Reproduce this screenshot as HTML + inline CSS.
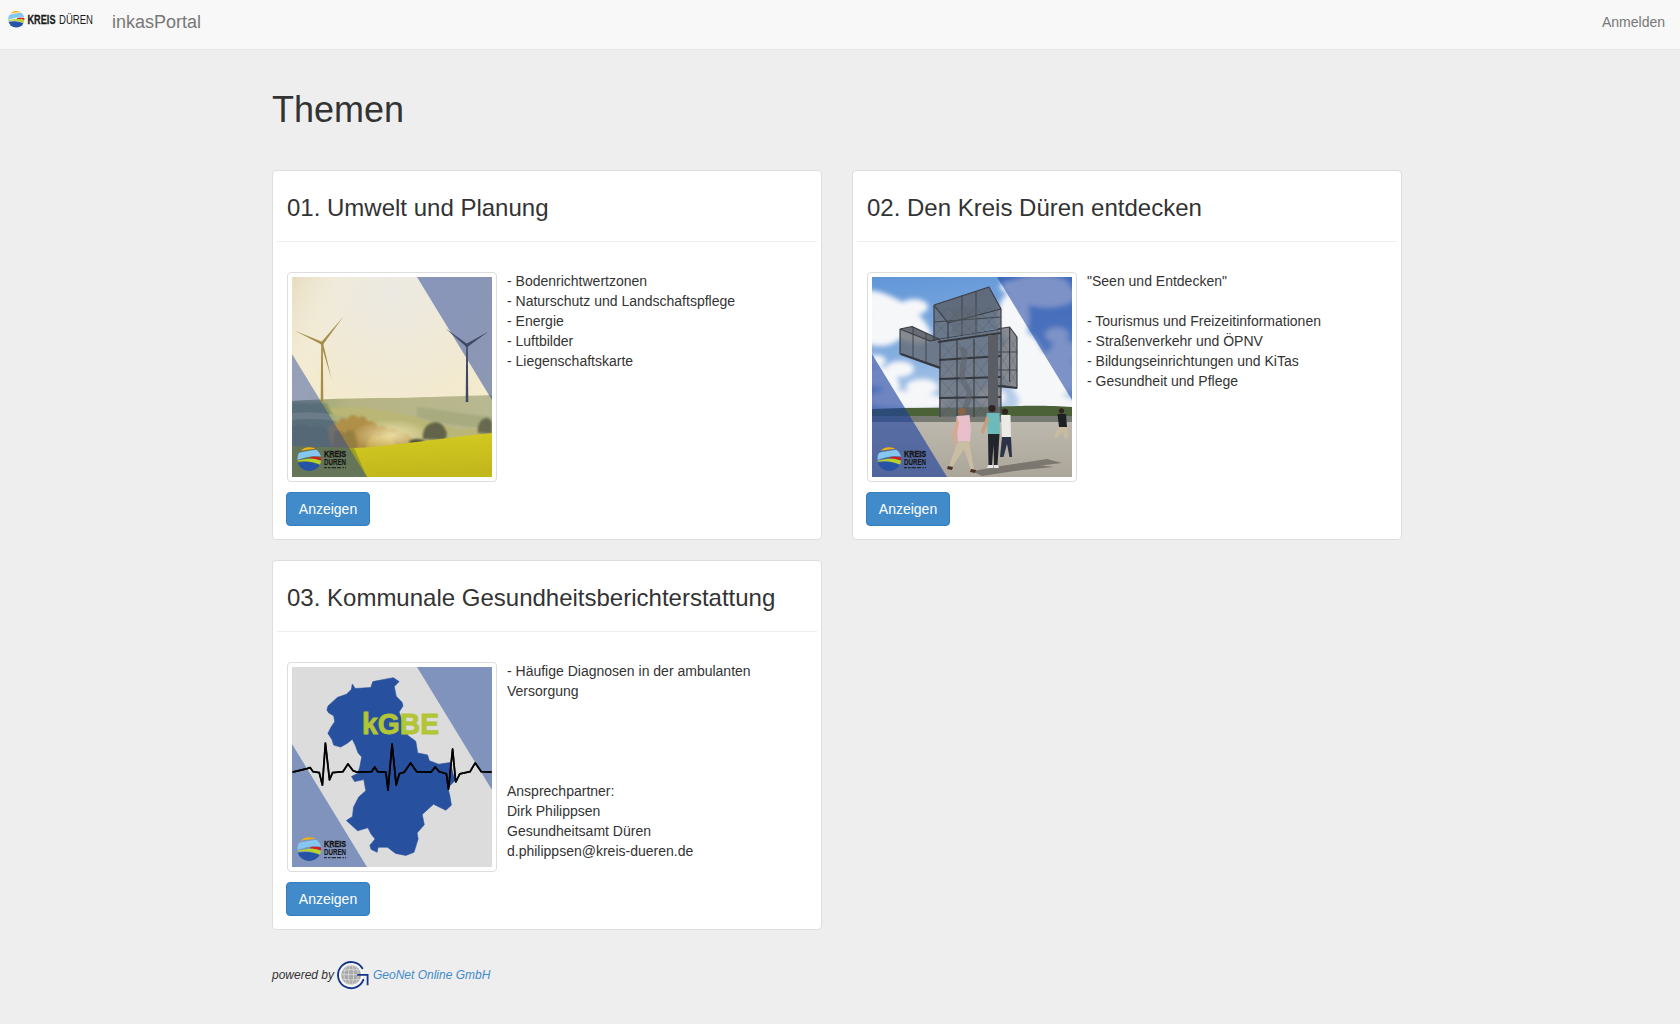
<!DOCTYPE html>
<html><head><meta charset="utf-8"><title>inkasPortal</title>
<style>
*{box-sizing:border-box}
html,body{margin:0;padding:0}
body{width:1680px;height:1024px;overflow:hidden;background:#eee;font-family:"Liberation Sans",sans-serif;font-size:14px;line-height:20px;color:#333;position:relative}
.nav{position:absolute;left:0;top:0;width:1680px;height:50px;background:#f8f8f8;border-bottom:1px solid #e7e7e7}
.brand{position:absolute;left:112px;top:12px;font-size:18px;line-height:20px;color:#777;white-space:nowrap}
.login{position:absolute;left:1602px;top:12px;font-size:14px;line-height:20px;color:#777}
h1{position:absolute;left:272px;top:90px;margin:0;font-size:36px;line-height:40px;font-weight:normal;color:#333}
.card{position:absolute;width:550px;height:370px;background:#fff;border:1px solid #ddd;border-radius:4px}
.card h3{position:absolute;left:14px;top:24px;margin:0;font-size:24px;line-height:26px;font-weight:normal;white-space:nowrap}
.card .hr{position:absolute;left:4px;top:70px;width:540px;height:1px;background:#eee}
.thumb{position:absolute;left:14px;top:101px;width:210px;height:210px;border:1px solid #ddd;border-radius:4px;padding:4px;background:#fff}
.thumb svg{display:block;width:200px;height:200px}
.txt{position:absolute;left:234px;top:100px;white-space:nowrap}
.btn{position:absolute;left:13px;top:321px;width:84px;height:34px;background:#428bca;border:1px solid #357ebd;border-radius:4px;color:#fff;text-align:center;line-height:32px;font-size:14px}
.foot{position:absolute;left:272px;top:967px;font-size:12px;line-height:16px;font-style:italic;color:#333;white-space:nowrap}
.foot .gn{color:#428bca}
</style></head>
<body>
<svg width="0" height="0" style="position:absolute">
<defs>
<clipPath id="kdc"><circle cx="0" cy="0" r="1"/></clipPath>
<symbol id="kd" viewBox="-1.05 -1.05 2.1 2.1">
<g clip-path="url(#kdc)">
<path d="M-0.75,-0.7 C-0.4,-0.78 0.1,-0.88 0.55,-0.86 L0.6,-1.1 L-0.8,-1.1Z" fill="#f5b20f"/>
<path d="M-1,-0.5 C-0.5,-0.64 0.2,-0.78 1,-0.84 L1,-0.22 C0.6,-0.26 0.1,-0.24 -0.3,-0.14 C-0.6,-0.06 -0.8,0.02 -1,0.06Z" fill="#86c7ef"/>
<path d="M0.08,-0.16 C0.4,-0.22 0.75,-0.2 1,-0.14 L1,0.1 C0.7,0.02 0.35,-0.04 0.08,-0.06Z" fill="#d0201f"/>
<path d="M-1,0.14 C-0.6,0.02 -0.1,-0.08 0.3,-0.03 C0.6,0.0 0.85,0.08 1,0.14 L1,0.48 C0.6,0.34 0.2,0.22 -0.2,0.18 C-0.5,0.16 -0.8,0.2 -1,0.22Z" fill="#b8d22c"/>
<path d="M-1,0.3 C-0.7,0.22 -0.3,0.2 0.1,0.26 C0.5,0.32 0.8,0.46 1,0.56 L1,1.1 L-1,1.1Z" fill="#2753a6"/>
</g>
</symbol>
<symbol id="kdimg" viewBox="0 0 60 30">
<use href="#kd" x="-0.3" y="2.7" width="25" height="25"/>
<text x="27" y="13" font-family="Liberation Sans" font-weight="bold" font-size="9" stroke="#151515" stroke-width="0.35" fill="#151515" textLength="22" lengthAdjust="spacingAndGlyphs">KREIS</text>
<text x="27" y="21.2" font-family="Liberation Sans" font-weight="bold" font-size="9" stroke="#151515" stroke-width="0.1" fill="#151515" textLength="22" lengthAdjust="spacingAndGlyphs">DÜREN</text>
<path d="M27,23.6 h3 M31,23.6 h2.5 M34.5,23.6 h4.5 M40,23.6 h4 M45.5,23.6 h1.5 M48,23.6 h1" stroke="#151515" stroke-width="1.2" opacity=".8"/>
</symbol>
</defs></svg>
<div class="nav">
  <svg style="position:absolute;left:0;top:0" width="100" height="40" viewBox="0 0 100 40">
  <use href="#kd" x="7.6" y="10.6" width="17.4" height="17.4"/>
  <text x="27.5" y="23.8" font-family="Liberation Sans" font-weight="bold" font-size="12.8" fill="#1a1a1a" stroke="#1a1a1a" stroke-width="0.3" textLength="28" lengthAdjust="spacingAndGlyphs">KREIS</text>
  <text x="59" y="23.8" font-family="Liberation Sans" font-size="12.8" fill="#1a1a1a" textLength="34" lengthAdjust="spacingAndGlyphs">DÜREN</text>
</svg>
  <div class="brand">inkasPortal</div>
  <div class="login">Anmelden</div>
</div>
<h1>Themen</h1>

<div class="card" style="left:272px;top:170px">
  <h3>01. Umwelt und Planung</h3>
  <div class="hr"></div>
  <div class="thumb"><svg id="img1" viewBox="0 0 200 200">
<defs>
<radialGradient id="sky1" cx="0.5" cy="0.08" r="0.9">
<stop offset="0" stop-color="#ebe9e2"/>
<stop offset="0.5" stop-color="#f1e9d2"/>
<stop offset="0.85" stop-color="#f6ebca"/>
<stop offset="1" stop-color="#f1e2b8"/>
</radialGradient>
<linearGradient id="sky1b" x1="0" y1="0" x2="1" y2="0.3">
<stop offset="0" stop-color="#dcd2b0" stop-opacity=".55"/>
<stop offset="0.35" stop-color="#fff" stop-opacity="0"/>
</linearGradient>
<linearGradient id="mead1" x1="0" y1="0" x2="0.2" y2="1">
<stop offset="0" stop-color="#d6cc22"/>
<stop offset="1" stop-color="#c2b81c"/>
</linearGradient>
<linearGradient id="hill1" x1="0" y1="0" x2="1" y2="0">
<stop offset="0" stop-color="#94a070"/>
<stop offset="0.3" stop-color="#b6b484"/>
<stop offset="1" stop-color="#b8b892"/>
</linearGradient>
<radialGradient id="glow1" cx="0.5" cy="0.5" r="0.5">
<stop offset="0" stop-color="#fff4c0" stop-opacity=".75"/>
<stop offset="1" stop-color="#fff4c0" stop-opacity="0"/>
</radialGradient>
<filter id="b1" x="-30%" y="-30%" width="160%" height="160%"><feGaussianBlur stdDeviation="1.1"/></filter>
<filter id="b1s" x="-30%" y="-30%" width="160%" height="160%"><feGaussianBlur stdDeviation="0.8"/></filter>
</defs>
<rect width="200" height="200" fill="url(#sky1)"/>
<rect width="200" height="125" fill="url(#sky1b)"/>
<path d="M0,124 C30,122 60,121 100,121 C140,120 170,119 200,118 L200,200 L0,200Z" fill="url(#hill1)"/>
<path d="M0,138 C20,134 40,130 60,130 C100,132 140,144 165,152 L200,152 L200,200 L0,200Z" fill="#bab676" filter="url(#b1s)"/>
<path d="M0,126 L34,126 L60,172 L0,172Z" fill="#849060" filter="url(#b1s)"/>
<path d="M0,136 C20,134 35,136 55,140 L55,146 C35,142 20,141 0,143Z" fill="#aab07e" opacity=".8"/>
<path d="M125,130 C150,133 180,138 200,140 L200,152 C180,150 150,148 125,140Z" fill="#a8aa80" filter="url(#b1s)"/>
<g filter="url(#b1s)">
<path d="M36,172 L36,152 C38,146 42,144 45,147 C47,141 52,139 55,143 C57,138 63,136 66,141 C69,138 74,139 76,145 C79,143 84,145 86,150 C89,148 94,149 96,153 C100,151 106,152 108,156 C112,155 118,157 120,162 L120,172Z" fill="#b09048"/>
<path d="M40,172 L42,156 C46,152 50,153 52,157 C56,151 62,152 64,158 L66,172Z" fill="#8f7a40" opacity=".8"/>
<path d="M74,172 C76,160 82,156 88,160 C92,156 100,158 102,164 L104,172Z" fill="#c6a64e" opacity=".9"/>
<path d="M0,172 L0,150 C6,146 14,147 18,151 C24,147 32,149 36,154 L40,172Z" fill="#7c855a"/>
</g>
<ellipse cx="100" cy="158" rx="40" ry="16" fill="url(#glow1)"/>
<g filter="url(#b1s)">
<path d="M131,162 C130,154 134,147 140,146 C145,144 151,147 153,152 C156,156 155,161 152,163Z" fill="#62634a"/><path d="M186,156 C185,149 188,142 194,141 C199,141 201,146 200,150 L200,157Z" fill="#686a50"/><ellipse cx="125" cy="165" rx="8" ry="3" fill="#4f5038"/>
</g>
<path d="M0,171 C40,170 60,172 80,170 C120,166 160,160 200,156 L200,200 L0,200Z" fill="url(#mead1)"/>
<path d="M0,169 L62,171 L75,200 L0,200Z" fill="#9c9e24"/>
<g fill="#a48e48">
<path d="M29.2,67 L30.8,67 L31.3,125 L28.7,125Z"/>
<path d="M29,65.5 L51.5,39.5 L31,67.5Z"/><path d="M30,64.8 L2.5,53.5 L29.5,67.5Z"/><path d="M29,67 L39.5,102 L31,66Z"/>
<circle cx="30" cy="66.3" r="1.6"/>
</g>
<polygon points="125,0 200,0 200,123" fill="#23449a" opacity=".5"/>
<polygon points="0,77 0,200 75,200" fill="#23449a" opacity=".45"/>
<g fill="#3f4964">
<path d="M174.2,69 L175.8,69 L176.3,125 L173.7,125Z"/>
<path d="M174,67 L196.5,54.5 L176,69.5Z"/><path d="M176,67.5 L153.5,51.5 L174,69.5Z"/>
<circle cx="175" cy="68.3" r="1.6"/>
</g>
<use href="#kdimg" x="5" y="167" width="60" height="30"/>
</svg></div>
  <div class="txt">- Bodenrichtwertzonen<br>- Naturschutz und Landschaftspflege<br>- Energie<br>- Luftbilder<br>- Liegenschaftskarte</div>
  <div class="btn">Anzeigen</div>
</div>

<div class="card" style="left:852px;top:170px">
  <h3>02. Den Kreis Düren entdecken</h3>
  <div class="hr"></div>
  <div class="thumb"><svg id="img2" viewBox="0 0 200 200">
<defs>
<linearGradient id="sky2" x1="0" y1="0" x2="0.2" y2="1">
<stop offset="0" stop-color="#6096d8"/>
<stop offset="0.55" stop-color="#86aee0"/>
<stop offset="1" stop-color="#bcd2ea"/>
</linearGradient>
<linearGradient id="gr2" x1="0" y1="0" x2="0" y2="1">
<stop offset="0" stop-color="#bdb8ad"/>
<stop offset="1" stop-color="#aca69a"/>
</linearGradient>
<pattern id="mesh" width="4" height="4" patternUnits="userSpaceOnUse">
<path d="M0,0 L4,4 M4,0 L0,4" stroke="#3c3f46" stroke-width="0.5"/>
</pattern>
<filter id="blur2" x="-20%" y="-20%" width="140%" height="140%"><feGaussianBlur stdDeviation="2.4"/></filter>
</defs>
<rect width="200" height="145" fill="url(#sky2)"/>
<g fill="#f6f7f9" filter="url(#blur2)">
<ellipse cx="22" cy="40" rx="42" ry="17" transform="rotate(32 22 40)"/><ellipse cx="8" cy="55" rx="22" ry="14"/><ellipse cx="42" cy="30" rx="14" ry="8"/>
<ellipse cx="142" cy="40" rx="16" ry="26"/><ellipse cx="150" cy="85" rx="22" ry="30"/><ellipse cx="168" cy="110" rx="26" ry="20"/><ellipse cx="175" cy="128" rx="30" ry="10"/>
<ellipse cx="28" cy="92" rx="14" ry="8"/><ellipse cx="50" cy="110" rx="16" ry="8"/><ellipse cx="18" cy="108" rx="10" ry="7"/>
<ellipse cx="45" cy="125" rx="30" ry="8"/><ellipse cx="120" cy="120" rx="14" ry="9"/><ellipse cx="8" cy="100" rx="18" ry="10"/><ellipse cx="22" cy="122" rx="26" ry="9"/><ellipse cx="4" cy="84" rx="10" ry="6"/>
<ellipse cx="175" cy="18" rx="30" ry="13"/><ellipse cx="150" cy="10" rx="22" ry="8"/><ellipse cx="192" cy="75" rx="14" ry="12"/><ellipse cx="190" cy="100" rx="18" ry="16"/><ellipse cx="168" cy="8" rx="30" ry="10"/><ellipse cx="185" cy="58" rx="12" ry="8"/><ellipse cx="178" cy="88" rx="16" ry="14"/>
</g>
<path d="M0,132 C40,130 80,131 120,130 C160,128 180,129 200,130 L200,146 L0,146Z" fill="#4b6238"/>
<rect y="139" width="200" height="7" fill="#767a72"/>
<rect y="145" width="200" height="55" fill="url(#gr2)"/>
<!-- tower -->
<g fill="#dfe4ea" opacity=".35">
<path d="M62,28 L117,10 L129,32 L129,51 L62,63Z"/>
<path d="M28,52 L40,49.5 L67,62 L68,90 L28,77Z"/>
<path d="M125,52 L137.6,50 L145,60 L145,111 L128,108Z"/>
<path d="M67,63 L129,52 V140 H67Z"/>
</g>
<g fill="#4a4e56" opacity=".62">
<path d="M62,28 L117,10 L129,32 L129,51 L62,63Z"/>
<path d="M28,52 L40,49.5 L67,62 L68,90 L28,77Z"/>
<path d="M125,52 L137.6,50 L145,60 L145,111 L128,108Z"/>
<path d="M67,63 L129,52 V140 H67Z"/>
</g>
<path d="M62,28 L117,10 L129,32 L76,46Z" fill="#50545c" opacity=".3"/>
<path d="M28,52 L40,49.5 L67,62 L58,64Z" fill="#50545c" opacity=".55"/>
<g fill="none" stroke="#3c3f45" stroke-width="1.2" stroke-linejoin="round">
<path d="M62,28 L117,10 L129,32 L129,51 M62,28 L62,63 L129,52 M76,46 L129,32 M76,46 V62 M62,28 L76,46"/>
<path d="M28,52 L40,49.5 L67,62 M28,52 V77 L68,90 M28,52 L58,64 L67,62"/>
<path d="M125,52 L137.6,50 L145,60 V111 L128,108 M137.6,50 V105"/>
<path d="M68,62 V140 M85,62 V140 M102,62 V140 M129,52 V136"/>
</g>
<g fill="none" stroke="#35383e" stroke-width="2.2">
<path d="M66,65 L129,56 M67,83 L129,79 M67,102 L129,100 M67,121 L129,120 M125,109 L145,111"/>
<path d="M29,77 L68,91"/>
</g>
<g fill="none" stroke="#3c3f45" stroke-width="0.9">
<path d="M90,18 V58 M104,14 V56 M62,45 L129,40 M41,50 V81 M54,56 V86 M125,75 H145 M125,93 H145"/>
</g>
<path d="M68,65 L85,83 M85,65 L68,83 M68,83 L85,102 M85,83 L68,102 M68,102 L85,121 M85,102 L68,121 M68,121 L85,140 M85,121 L68,140 M85,65 L102,83 M102,65 L85,83 M85,83 L102,102 M102,83 L85,102 M85,102 L102,121 M102,102 L85,121 M85,121 L102,140 M102,121 L85,140 M102,65 L116,83 M116,65 L102,83 M102,83 L116,102 M116,83 L102,102 M102,102 L116,121 M116,102 L102,121 M102,121 L116,140 M116,121 L102,140 M126,60 L137,75 M137,60 L126,75 M126,75 L137,93 M137,75 L126,93 M126,93 L137,108 M137,93 L126,108 M137,60 L145,75 M145,60 L137,75 M137,75 L145,93 M145,75 L137,93 M137,93 L145,108 M145,93 L137,108 M62,30 L76,45 M76,30 L62,45 M62,45 L76,58 M76,45 L62,58 M76,30 L90,45 M90,30 L76,45 M76,45 L90,58 M90,45 L76,58 M90,30 L104,45 M104,30 L90,45 M90,45 L104,58 M104,45 L90,58 M104,30 L117,45 M117,30 L104,45 M104,45 L117,58 M117,45 L104,58 M117,30 L129,45 M129,30 L117,45 M117,45 L129,58 M129,45 L117,58" stroke="#3a3d43" stroke-width="0.4" fill="none" opacity=".55"/>
<rect x="116" y="58" width="10" height="82" fill="#5a5d63"/>
<g fill="#5e626a" opacity=".55"><path d="M86,70 C96,80 80,95 92,110 C100,120 84,130 94,140 L100,140 C90,130 106,120 98,110 C86,95 102,80 92,70Z"/><path d="M80,30 h26 v28 h-26z" opacity=".6"/></g>

<g>
<g fill="#3d3a38" opacity=".45"><path d="M100,194 L150,186 L182,190 L150,193 L110,199Z"/><path d="M122,190 L175,182 L190,186 L140,192Z"/></g>
<path d="M84.5,139 L97.5,138 L99,152 L98,165 L86,165 L85,152Z" fill="#e9bfcb"/>
<path d="M85,140 L81,156 L82,168 L84,168 L85,156 L87,146Z" fill="#d8a890"/>
<path d="M86,164 L97,164 L102,192 L99,193 L92,172 L80,190 L77,189Z" fill="#c9bea4"/>
<path d="M76,189 L81,190 L80,193 L75,192Z M99,192 L104,193 L103,196 L98,195Z" fill="#4a3020"/>
<circle cx="90" cy="134.5" r="3.8" fill="#8c6448"/>
<path d="M114.5,136 L127.5,136 L128,157 L116,157Z" fill="#6cbbba"/>
<path d="M115,138 L109,154 L110,157 L112,156 L117,143Z" fill="#c89c80"/>
<path d="M116,157 L127.5,157 L125.5,188 L122,188 L121.5,168 L120,188 L116.5,188Z" fill="#22252b"/>
<path d="M116,188 L121,188 L121,191 L115,191Z M122,188 L126,188 L127,191 L122,191Z" fill="#e8e8e8"/>
<circle cx="120" cy="131.5" r="3.6" fill="#2e2420"/>
<path d="M129,138 L138.5,138 L139,160 L130,160Z" fill="#ebeae6"/>
<path d="M130,160 L139,160 L140,180 L137.5,180 L135,167 L131.5,180 L128,180Z" fill="#2c3248"/>
<circle cx="133" cy="134.5" r="3.1" fill="#2e2420"/>
<path d="M185.5,137 L194,137 L195,150 L187,150Z" fill="#1e2024"/>
<path d="M187,150 L195,150 L196,157 L195.5,162 L193,162 L191,155 L184,161 L181.5,160Z" fill="#c8bba0"/>
<circle cx="189.5" cy="133.8" r="2.6" fill="#2e2420"/>
</g>
<polygon points="125,0 200,0 200,123" fill="#1a3f9e" opacity=".55"/>
<polygon points="0,77 0,200 75,200" fill="#1a3f9e" opacity=".62"/>
<use href="#kdimg" x="5" y="167" width="60" height="30"/>
</svg></div>
  <div class="txt">"Seen und Entdecken"<br><br>- Tourismus und Freizeitinformationen<br>- Straßenverkehr und ÖPNV<br>- Bildungseinrichtungen und KiTas<br>- Gesundheit und Pflege</div>
  <div class="btn">Anzeigen</div>
</div>

<div class="card" style="left:272px;top:560px">
  <h3>03. Kommunale Gesundheitsberichterstattung</h3>
  <div class="hr"></div>
  <div class="thumb"><svg id="img3" viewBox="0 0 200 200">
<rect width="200" height="200" fill="#dcdcdc"/>
<polygon points="125,0 200,0 200,123" fill="#7f93bd"/>
<polygon points="0,77 0,200 75,200" fill="#7f93bd"/>
<polygon fill="#27509e" stroke="#27509e" stroke-width="0.6" stroke-linejoin="round" points="60.3,17.1 63.2,21.5 78.8,20.5 80.8,14.6 101.3,10.7 107.1,14.6 102.3,19.5 104.2,29.3 110,35.2 111,39 107.1,44.9 113,62.5 115.9,68.4 123.75,74.2 125.7,85.9 135.5,87.9 137.4,93.75 146.6,97.2 157.9,95.6 163,113.6 155.9,120.8 157.9,129 159.4,138.2 153.8,143.3 141.5,137.2 130.2,147.4 132.3,157.7 125.1,165.9 126.1,172 122,185.3 113.8,188.4 103.6,186.4 95.4,180.2 86.1,180.2 85.1,185.3 79,182.3 77.9,178.2 83.1,172 79,166.9 75.9,160.7 65.6,163.8 54.4,153.6 60.5,149.5 61.5,140.2 66.7,130 73.8,123.8 71.8,112.6 62.6,114.6 59.5,109.5 65.6,106.4 67.7,100.3 69.7,90 66.1,85.9 63.2,78.1 60.3,72.3 55.4,76.2 48.6,80.1 41.7,78.1 39.8,72.3 35.9,66.4 38.8,60.5 42.7,54.7 41.7,48.8 36.8,45.9 34.9,43 36,39 45.6,30.3 54.4,27.3 59.3,22.5"/>
<text x="70" y="67" font-family="Liberation Sans" font-weight="bold" font-size="30" fill="#b1c536" stroke="#b1c536" stroke-width="0.9" textLength="77" lengthAdjust="spacingAndGlyphs">kGBE</text>
<polyline id="ecg" fill="none" stroke="#000" stroke-width="1.7" stroke-linejoin="round" points="0.6,105.1 15.0,101.6 18.1,100.6 21.1,104.7 27.3,105.7 30.4,118.1 33.4,76.0 37.5,112.9 40.6,105.7 50.9,104.7 56.0,96.9 61.1,103.7 65.2,105.1 79.6,104.7 82.7,100.0 85.7,104.7 93.9,105.1 96.0,123.2 100.1,77.0 104.2,118.1 107.3,106.8 112.4,105.1 118.6,95.9 124.7,104.7 139.1,105.1 143.2,100.0 147.3,104.7 154.4,106.8 156.5,122.2 160.6,82.2 163.7,115.0 167.8,106.8 178.0,104.7 183.2,95.9 189.3,104.7 199.6,105.1"/>
<use href="#ecg" stroke="#9aa0b0" stroke-width="0.5" opacity="0.8"/>
<use href="#kdimg" x="5" y="167" width="60" height="30"/>
</svg></div>
  <div class="txt">- Häufige Diagnosen in der ambulanten<br>Versorgung<br><br><br><br><br>Ansprechpartner:<br>Dirk Philippsen<br>Gesundheitsamt Düren<br>d.philippsen@kreis-dueren.de</div>
  <div class="btn">Anzeigen</div>
</div>

<div class="foot">powered by</div>
<svg style="position:absolute;left:336px;top:959px" width="36" height="32" viewBox="0 0 36 32">
<circle cx="15.1" cy="15.9" r="12.2" fill="#f6f6f4"/>
<circle cx="15.1" cy="15.9" r="9.9" fill="#a9a9a9"/>
<g stroke="#dedede" stroke-width="0.75" fill="none">
<ellipse cx="15.1" cy="15.9" rx="2.6" ry="9.9"/><ellipse cx="15.1" cy="15.9" rx="7.2" ry="9.9"/>
<path d="M6.5,11.2 Q15.1,9.8 23.7,11.2 M5.2,15.6 H25 M6.2,20.3 Q15.1,21.8 24,20.3"/>
</g>
<path d="M26.33,9.35 A13.1,13.1 0 1 0 27.33,20.79" fill="none" stroke="#15358a" stroke-width="1.9" stroke-linecap="round"/>
<path d="M21.2,15.9 H31.6 V26.2" fill="none" stroke="#15358a" stroke-width="1.8"/>
</svg>
<div class="foot" style="left:373px;color:#428bca">GeoNet Online GmbH</div>
</body></html>
